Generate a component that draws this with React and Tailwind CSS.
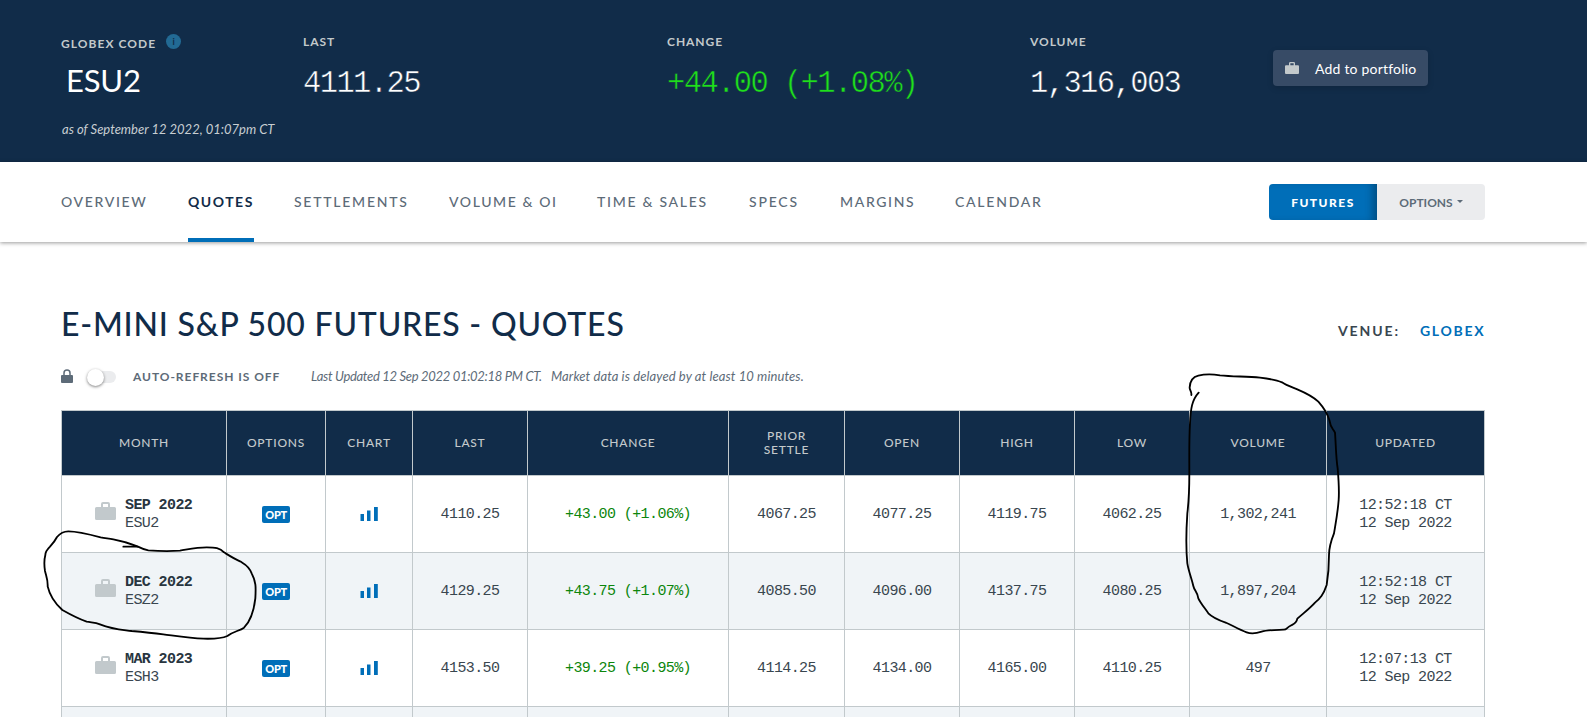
import React from "react";

const tabs = [
  { label: "OVERVIEW", cls: "w-[87px] tracking-[1.65px]" },
  { label: "QUOTES", cls: "w-[66px] tracking-[1.5px]", active: true },
  { label: "SETTLEMENTS", cls: "w-[115px] tracking-[1.75px]" },
  { label: "VOLUME & OI", cls: "w-[108px] tracking-[1.6px]" },
  { label: "TIME & SALES", cls: "w-[112px] tracking-[1.7px]" },
  { label: "SPECS", cls: "w-[51px] tracking-[1.8px]" },
  { label: "MARGINS", cls: "w-[75px] tracking-[1.65px]" },
  { label: "CALENDAR", cls: "w-[89px] tracking-[1.75px]" },
];

const columns = [
  { label: "MONTH", w: "w-[165px]" },
  { label: "OPTIONS", w: "w-[99px]" },
  { label: "CHART", w: "w-[87px]" },
  { label: "LAST", w: "w-[115px]" },
  { label: "CHANGE", w: "w-[201px]" },
  { label: "PRIOR SETTLE", w: "w-[116px]" },
  { label: "OPEN", w: "w-[115px]" },
  { label: "HIGH", w: "w-[115px]" },
  { label: "LOW", w: "w-[115px]" },
  { label: "VOLUME", w: "w-[137px]" },
  { label: "UPDATED", w: "w-[158px]" },
];

const rows = [
  { month: "SEP 2022", code: "ESU2", last: "4110.25", change: "+43.00 (+1.06%)", settle: "4067.25", open: "4077.25", high: "4119.75", low: "4062.25", volume: "1,302,241", time: "12:52:18 CT" },
  { month: "DEC 2022", code: "ESZ2", last: "4129.25", change: "+43.75 (+1.07%)", settle: "4085.50", open: "4096.00", high: "4137.75", low: "4080.25", volume: "1,897,204", time: "12:52:18 CT" },
  { month: "MAR 2023", code: "ESH3", last: "4153.50", change: "+39.25 (+0.95%)", settle: "4114.25", open: "4134.00", high: "4165.00", low: "4110.25", volume: "497", time: "12:07:13 CT" },
];

const Briefcase = ({ className }) => (
  <svg viewBox="0 0 21 18" className={className} fill="currentColor">
    <path
      fillRule="evenodd"
      d="M6 5V2a2 2 0 0 1 2-2h5a2 2 0 0 1 2 2v3h4.5A1.5 1.5 0 0 1 21 6.500V16.500a1.500 1.500 0 0 1-1.500 1.500h-18A1.500 1.500 0 0 1 0 16.500V6.500A1.500 1.500 0 0 1 1.500 5zM8 5h5V2H8z"
    />
  </svg>
);

const Stat = ({ label, value, className }) => (
  <div className={className}>
    <p className="text-[12px] leading-[16px] font-bold tracking-[0.95px] text-[#c3c9cb]">{label}</p>
    {/* stroke in the bar colour keeps the digits light */}
    <p className="mt-[16px] whitespace-nowrap font-['Liberation_Mono',monospace] text-[30.5px] leading-[36px] tracking-[-1.6px] [-webkit-text-stroke:0.5px_#112c49]">
      {value}
    </p>
  </div>
);

const TopBar = () => (
  <header className="flex h-[162px] bg-[#112c49] pl-[61px] pt-[34px] text-white">
    <div className="w-[242px]">
      <div className="flex h-[18px] items-start">
        <span className="mt-[1px] text-[12px] leading-[18px] font-bold tracking-[1.05px] text-[#c3c9cb]">GLOBEX CODE</span>
        <span className="ml-[10px] flex h-[15px] w-[15px] items-center justify-center rounded-full bg-[#226a94] text-[9px] leading-none font-bold text-[#112c49]">
          i
        </span>
      </div>
      <p className="mt-[9px] pl-[5px] text-[31px] leading-[38px] tracking-[-0.2px]">ESU2</p>
      <p className="mt-[20px] pl-[1px] text-[13px] leading-[20px] text-[#c8ced2] italic">
        as of September 12 2022, 01:07pm CT
      </p>
    </div>
    <Stat className="w-[363px]" label="LAST" value="4111.25" />
    <Stat className="w-[364px] pl-[1px] [&>p:last-child]:text-[#1fe01b]" label="CHANGE" value="+44.00 (+1.08%)" />
    <Stat className="w-[243px]" label="VOLUME" value="1,316,003" />
    <button className="mt-[16px] flex h-[36px] w-[155px] items-center rounded-[4px] bg-[#374b66] pl-[12px] text-[14px] shadow-[0_2px_6px_rgba(0,0,0,0.15)]">
      <Briefcase className="mb-[1px] h-[12px] w-[14px] text-[#c3c9cb]" />
      <span className="ml-[16px] whitespace-nowrap tracking-[0.2px]">Add to portfolio</span>
    </button>
  </header>
);

const NavBar = () => (
  <nav className="flex h-[80px] bg-white pl-[61px] shadow-[0_1px_4px_rgba(0,0,0,0.4)]">
    <div className="flex w-[1208px] gap-[40px]">
      {tabs.map((t) => (
        <a
          key={t.label}
          className={`flex h-[80px] items-center whitespace-nowrap text-[14px] ${t.cls} ${
            t.active ? "border-b-4 border-[#006eb8] pt-[2px] font-bold text-[#112c49]" : "pb-[2px] font-medium text-[#5d6b78]"
          }`}
        >
          {t.label}
        </a>
      ))}
    </div>
    <div className="mt-[22px] flex h-[36px]">
      <button className="flex w-[108px] items-center justify-center rounded-l-[4px] bg-[#006eb8] pt-[1px] text-[12px] font-black tracking-[1.5px] text-white shadow-[inset_-8px_0_8px_-4px_rgba(0,0,0,0.3)]">
        FUTURES
      </button>
      <button className="flex w-[108px] items-center justify-center gap-[4px] rounded-r-[4px] bg-[#ebecee] pt-[1px] text-[12px] font-bold text-[#5d6b78]">
        OPTIONS
        <span className="mb-[2px] border-x-[3.5px] border-t-[3.5px] border-x-transparent border-t-[#5d6b78]" />
      </button>
    </div>
  </nav>
);

const ChartBars = () => (
  <svg viewBox="0 0 18 14" className="mx-auto mb-[3px] h-[14px] w-[18px]" fill="#006eb8">
    <rect x="0.5" y="7" width="3.5" height="7" />
    <rect x="7" y="3.5" width="3.5" height="10.5" />
    <rect x="14" y="0" width="3.8" height="14" />
  </svg>
);

const QuotesTable = () => (
  <table className="w-[1424px] table-fixed border-separate border-spacing-0 border-t border-l border-[#c2c9cc]">
    <thead>
      <tr className="h-[65px] bg-[#112c49]">
        {columns.map((c) => (
          <th
            key={c.label}
            className={`border-r border-b border-[#c2c9cc] px-[30px] text-[12px] leading-[14px] font-medium tracking-[0.75px] text-[#c3c9cb] first:px-0 [&:nth-child(2)]:px-0 [&:nth-child(3)]:px-0 ${c.w}`}
          >
            {c.label}
          </th>
        ))}
      </tr>
    </thead>
    <tbody className="text-center font-['Liberation_Mono',monospace] text-[15px] leading-[18px] tracking-[-0.6px] text-[#39464f] [&_td]:border-r [&_td]:border-b [&_td]:border-[#c2c9cc] [&_td]:pt-[2px]">
      {rows.map((r) => (
        <tr key={r.code} className="h-[77px] even:bg-[#f0f4f7]">
          <td>
            <div className="flex items-center pl-[33px] text-left">
              <Briefcase className="mb-[8px] h-[18px] w-[21px] text-[#c2c9cc]" />
              <div className="ml-[9px]">
                <p className="font-bold text-[#28353f]">{r.month}</p>
                <p>{r.code}</p>
              </div>
            </div>
          </td>
          <td>
            <span className="mx-auto mb-[2px] flex h-[17px] w-[28px] items-center justify-center rounded-[2px] bg-[#006eb8] pt-[2px] font-['Lato',sans-serif] text-[11px] font-black tracking-[-0.4px] text-white">
              OPT
            </span>
          </td>
          <td><ChartBars /></td>
          <td>{r.last}</td>
          <td className="text-[#0c860c]">{r.change}</td>
          <td>{r.settle}</td>
          <td>{r.open}</td>
          <td>{r.high}</td>
          <td>{r.low}</td>
          <td>{r.volume}</td>
          <td>
            <p>{r.time}</p>
            <p>12 Sep 2022</p>
          </td>
        </tr>
      ))}
      {/* next row, cut off by the fold */}
      <tr className="h-[77px] bg-[#f0f4f7]">
        {columns.map((c) => (
          <td key={c.label} />
        ))}
      </tr>
    </tbody>
  </table>
);

// pen marks over the DEC 2022 cell and the volume column
const PenMarks = () => (
  <svg
    viewBox="0 0 1587 717"
    className="pointer-events-none absolute inset-0 h-[717px] w-[1587px]"
    fill="none"
    stroke="#000"
    strokeLinecap="round"
    strokeLinejoin="round"
  >
    <g transform="translate(30 400) scale(0.33333)" strokeWidth="5.5">
      <path d="M322 439C300 430 280 424 250 418C235 415 225 415 212 412C175 402 140 394 115 394C98 394 90 400 81 411C76 421 69 430 60 440C50 450 46 456 46 465C42 480 43 500 45 513C49 530 54 540 53 559C60 590 75 610 97 630C120 643 142 655 170 665C185 668 195 667 210 673C250 689 275 689 305 693C340 696 370 699 400 703C440 708 480 714 520 716C555 717 575 716 592 708C610 694 628 693 642 683C665 660 672 630 676 595C678 560 678 545 665 520C655 495 642 492 630 484C610 475 595 465 582 457C570 443 555 442 530 442C500 442 475 448 450 452C420 454 380 453 355 451C340 448 330 443 322 439" />
      <path d="M280 440H322" />
    </g>
    <g transform="translate(1160 300) scale(0.33333)" strokeWidth="5.5">
      <path d="M94 285C96 275 88 270 89 262C90 245 98 231 115 227C135 222 155 222 180 226C220 230 260 229 300 233C325 236 350 240 366 247C380 257 395 261 412 268C440 280 460 290 475 305C490 322 502 340 508 360C512 385 518 384 525 398C528 440 528 475 533 505C536 540 538 570 536 600C533 640 527 670 522 700C512 725 507 740 507 765C507 790 505 825 500 855C490 885 480 895 465 908C450 925 430 940 412 956C409 972 400 972 390 978C380 983 380 990 370 989C345 990 320 990 305 995C290 1000 275 1003 260 997C235 988 215 975 200 969C175 960 160 955 145 940C135 925 122 910 115 895C112 875 103 872 100 858C95 835 86 815 82 790C78 750 78 700 82 640C87 600 88 560 88 520C88 470 87 420 90 370C92 325 96 300 116 278" />
    </g>
  </svg>
);

const App = () => {
  return (
    <div className="relative h-[717px] w-[1587px] overflow-hidden bg-white font-['Lato',sans-serif]">
      <TopBar />
      <NavBar />

      <main className="pl-[61px] pt-[60px]">
        <div className="flex w-[1424px] items-start justify-between">
          <h1 className="whitespace-nowrap text-[32px] leading-[44px] font-medium tracking-[0.8px] text-[#112c49]">
            E-MINI S&amp;P 500 FUTURES - QUOTES
          </h1>
          <p className="mt-[20px] flex text-[14px] leading-[18px] font-bold">
            <span className="w-[82px] tracking-[1.9px] text-[#39464f]">VENUE:</span>
            <span className="w-[65px] tracking-[1.7px] text-[#006eb8]">GLOBEX</span>
          </p>
        </div>

        {/* auto-refresh row */}
        <div className="mt-[21px] flex h-[20px] items-center text-[12px] text-[#5d6b78]">
          <svg viewBox="0 0 12 14" className="mb-[2px] h-[14px] w-[12px]">
            <path d="M3 7V4a3 3 0 0 1 6 0v3" fill="none" stroke="#5d6b78" strokeWidth="1.5" />
            <rect y="6" width="12" height="8" rx="1" fill="#5d6b78" />
          </svg>
          <div className="ml-[14px] flex h-[12px] w-[29px] items-center rounded-full bg-[#ebecee]">
            <span className="h-[17px] w-[17px] shrink-0 rounded-full bg-white shadow-[0_1px_3px_rgba(0,0,0,0.5)]" />
          </div>
          <span className="ml-[17px] w-[178px] font-bold tracking-[0.95px]">AUTO-REFRESH IS OFF</span>
          <span className="w-[240px] whitespace-nowrap text-[13px] tracking-[-0.3px] italic">Last Updated 12 Sep 2022 01:02:18 PM CT.</span>
          <span className="whitespace-nowrap text-[13px] tracking-[0.1px] italic">Market data is delayed by at least 10 minutes.</span>
        </div>

        <div className="mt-[23px]">
          <QuotesTable />
        </div>
      </main>

      <PenMarks />
    </div>
  );
};

export default App;
